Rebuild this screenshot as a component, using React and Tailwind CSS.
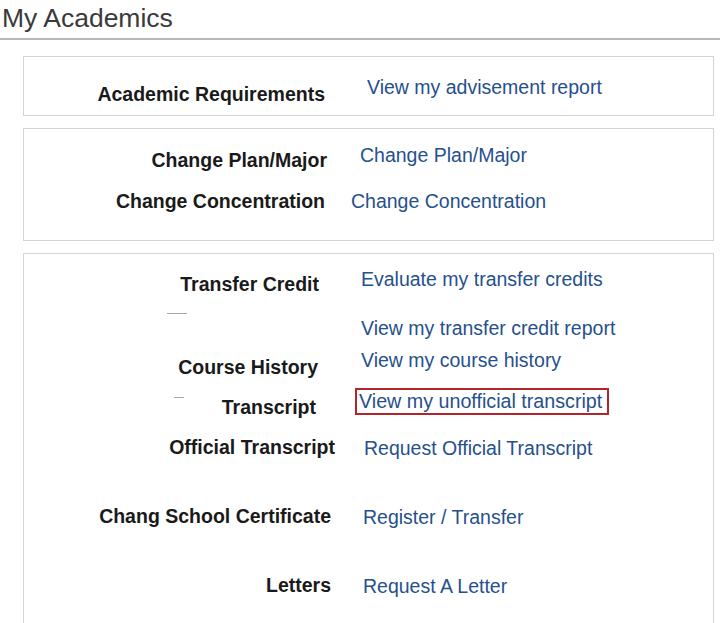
import React from 'react';

const font = { fontFamily: '"Liberation Sans", Arial, sans-serif' };

function Row({ height, label, labelW, labelMt, linkMl, link, boxed, dash }) {
  return (
    <div className={`flex items-start ${height}`}>
      <div className={`flex items-start shrink-0 ${labelW}`}>
        {dash}
        {label && (
          <span className={`ml-auto text-right font-bold text-[19.5px] leading-[24px] text-[#1a1a1a] whitespace-nowrap ${labelMt}`}>
            {label}
          </span>
        )}
      </div>
      {boxed ? (
        <a href="#" className={`border-2 border-[#b3252b] pl-[2px] pr-[5px] text-[19.7px] leading-[23px] text-[#26508e] whitespace-nowrap ${linkMl}`}>
          {link}
        </a>
      ) : (
        <a href="#" className={`text-[19.5px] leading-[24px] text-[#26508e] whitespace-nowrap ${linkMl}`}>
          {link}
        </a>
      )}
    </div>
  );
}

export default function App() {
  return (
    <div className="w-[720px] h-[623px] overflow-hidden bg-white" style={font}>
      <div className="border-b-2 border-[#b8b8b8] h-[40px]">
        <h1 className="pl-[2px] pt-[3px] text-[26.5px] leading-[30px] text-[#3a3a3a]">My Academics</h1>
      </div>

      <div className="ml-[23px] mr-[6px] mt-[16px] flex flex-col gap-[12px]">
        {/* Academic requirements */}
        <div className="border border-[#d4d4d4] h-[60px] pt-[18px]">
          <Row
            label="Academic Requirements"
            labelW="w-[301px]"
            labelMt="mt-[7px]"
            linkMl="ml-[42px]"
            link="View my advisement report"
          />
        </div>

        {/* Plan / concentration */}
        <div className="border border-[#d4d4d4] h-[113px] pt-[14px]">
          <Row
            height="h-[46px]"
            label="Change Plan/Major"
            labelW="w-[303px]"
            labelMt="mt-[5px]"
            linkMl="ml-[33px]"
            link="Change Plan/Major"
          />
          <Row
            label="Change Concentration"
            labelW="w-[301px]"
            labelMt="mt-0"
            linkMl="ml-[26px]"
            link="Change Concentration"
          />
        </div>

        {/* Records */}
        <div className="border border-[#d4d4d4] h-[400px] pt-[13px]">
          <div className="flex items-start h-[49px]">
            <div className="flex flex-col items-end shrink-0 w-[295px]">
              <span className="mt-[5px] font-bold text-[19.5px] leading-[24px] text-[#1a1a1a] whitespace-nowrap">Transfer Credit</span>
              <span className="self-start ml-[143px] mt-[17px] w-[20px] h-[1px] bg-[#a8a8a8]"></span>
            </div>
            <a href="#" className="ml-[42px] text-[19.5px] leading-[24px] text-[#26508e] whitespace-nowrap">Evaluate my transfer credits</a>
          </div>
          <Row
            height="h-[32px]"
            labelW="w-[295px]"
            linkMl="ml-[42px]"
            link="View my transfer credit report"
          />
          <Row
            height="h-[40px]"
            label="Course History"
            labelW="w-[294px]"
            labelMt="mt-[7px]"
            linkMl="ml-[43px]"
            link="View my course history"
          />
          <Row
            height="h-[48px]"
            label="Transcript"
            labelW="w-[292px]"
            labelMt="mt-[7px]"
            linkMl="ml-[39px]"
            link="View my unofficial transcript"
            boxed
            dash={<span className="mt-[9px] ml-[150px] w-[10px] h-[1px] bg-[#a8a8a8]"></span>}
          />
          <Row
            height="h-[69px]"
            label="Official Transcript"
            labelW="w-[311px]"
            labelMt="-mt-[1px]"
            linkMl="ml-[29px]"
            link="Request Official Transcript"
          />
          <Row
            height="h-[69px]"
            label="Chang School Certificate"
            labelW="w-[307px]"
            labelMt="-mt-[1px]"
            linkMl="ml-[32px]"
            link="Register / Transfer"
          />
          <Row
            label="Letters"
            labelW="w-[307px]"
            labelMt="-mt-[1px]"
            linkMl="ml-[32px]"
            link="Request A Letter"
          />
        </div>
      </div>
    </div>
  );
}
